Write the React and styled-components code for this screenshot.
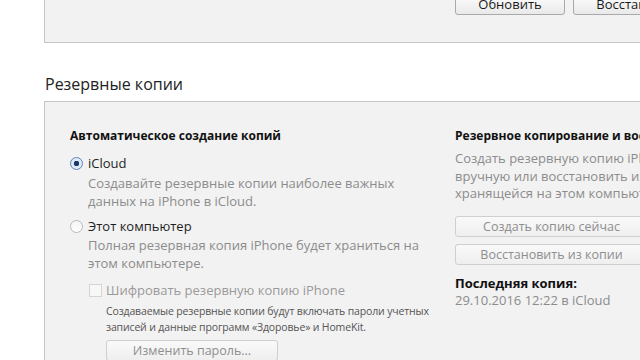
import React from 'react';
import styled, { createGlobalStyle } from 'styled-components';

const theme = {
    panel: '#f2f2f2',
    border: '#c6c6c6',
    text: '#1e1e1e',
    muted: '#8c8c8c',
    font: '"Open Sans", "Noto Sans", sans-serif'
};

const GlobalStyle = createGlobalStyle`
    body {
        margin: 0;
        background: #ffffff;
        font-family: ${theme.font};
        color: ${theme.text};
        overflow: hidden;
    }
`;

const Page = styled.div`
    width: 640px;
    height: 360px;
    overflow: hidden;
    padding-left: 44px;
    box-sizing: border-box;
`;

// top panel is mostly scrolled off, only its lower edge and buttons show
const TopPanel = styled.div`
    margin-top: -10px;
    height: 53px;
    box-sizing: border-box;
    background: ${theme.panel};
    border: 1px solid ${theme.border};
    border-right: none;
    display: flex;
    align-items: flex-start;
    gap: 8px;
    padding: 1px 0 0 410px;
    overflow: hidden;
`;

const Button = styled.button`
    height: ${p => p.$h || 21}px;
    width: ${p => p.$w || 110}px;
    border: 1px solid ${p => (p.$disabled ? '#cfcfcf' : '#a9a9a9')};
    border-radius: 3px;
    background: ${p => (p.$disabled
        ? 'linear-gradient(#f9f9f9, #efefef)'
        : 'linear-gradient(#ffffff, #e9e9e9)')};
    color: ${p => (p.$disabled ? '#8e8e8e' : '#1a1a1a')};
    font-family: ${theme.font};
    font-size: ${p => (p.$disabled ? 12.5 : 13)}px;
    padding: 0;
    flex-shrink: 0;
    white-space: nowrap;
    cursor: default;
`;

const SectionTitle = styled.h2`
    margin: 0;
    padding: 30px 0 0 1px;
    height: 58px;
    box-sizing: border-box;
    font-size: 16px;
    font-weight: 400;
    color: #222;
`;

const Panel = styled.div`
    background: ${theme.panel};
    border: 1px solid ${theme.border};
    border-right: none;
    border-bottom: none;
    height: 280px;
    box-sizing: border-box;
    padding: 26px 0 0 25px;
    display: grid;
    grid-template-columns: 385px 1fr;
    overflow: hidden;
`;

const Column = styled.div`
    display: flex;
    flex-direction: column;
    white-space: nowrap;
    min-width: 0;
`;

const Heading = styled.div`
    font-size: 12px;
    font-weight: 700;
    line-height: 16px;
    color: #111;
`;

const OptionRow = styled.label`
    display: flex;
    align-items: center;
    gap: 5px;
    font-size: 13px;
    line-height: 18px;
    margin-top: ${p => p.$mt || 0}px;
`;

const Radio = styled.span`
    width: 11px;
    height: 11px;
    border-radius: 50%;
    border: 1px solid ${p => (p.$checked ? '#5f86bb' : '#b8b8b8')};
    background: ${p => (p.$checked
        ? 'radial-gradient(circle, #1c3a68 0 2.5px, #dfe9f6 3px)'
        : 'linear-gradient(#f4f4f4, #ffffff)')};
    flex-shrink: 0;
`;

const Description = styled.div`
    padding-left: 18px;
    font-size: 13px;
    line-height: 17.5px;
    color: ${theme.muted};
    margin-top: ${p => p.$mt || 0}px;
`;

const Nested = styled.div`
    padding-left: 19px;
    margin-top: 9px;
    display: flex;
    flex-direction: column;
`;

const CheckRow = styled.label`
    display: flex;
    align-items: center;
    gap: 4px;
    font-size: 13px;
    line-height: 18px;
    color: #9a9a9a;
`;

const Checkbox = styled.span`
    width: 11px;
    height: 11px;
    border: 1px solid #d4d4d4;
    background: #f7f7f7;
    flex-shrink: 0;
`;

const SmallNote = styled.div`
    padding-left: 17px;
    margin-top: 4px;
    font-size: 10.5px;
    line-height: 16px;
    letter-spacing: -0.15px;
    color: #555;
`;

const NestedButton = styled.div`
    padding-left: 17px;
    margin-top: 3px;
`;

const RightText = styled.div`
    font-size: 13px;
    line-height: 17.5px;
    color: ${theme.muted};
    margin-top: ${p => p.$mt || 0}px;
`;

const ButtonStack = styled.div`
    display: flex;
    flex-direction: column;
    gap: 7px;
    margin-top: 13px;
`;

const LastHeading = styled(Heading)`
    font-size: 13px;
    margin-top: 10px;
`;

const App = () => (
    <>
        <GlobalStyle />
        <Page>
            <TopPanel>
                <Button $w={110} $h={23}>Обновить</Button>
                <Button $w={190} $h={23}>Восстановить iPhone...</Button>
            </TopPanel>
            <SectionTitle>Резервные копии</SectionTitle>
            <Panel>
                <Column>
                    <Heading>Автоматическое создание копий</Heading>
                    <OptionRow $mt={10}>
                        <Radio $checked />
                        iCloud
                    </OptionRow>
                    <Description $mt={3}>
                        Создавайте резервные копии наиболее важных<br />
                        данных на iPhone в iCloud.
                    </Description>
                    <OptionRow $mt={7}>
                        <Radio />
                        Этот компьютер
                    </OptionRow>
                    <Description $mt={2}>
                        Полная резервная копия iPhone будет храниться на<br />
                        этом компьютере.
                    </Description>
                    <Nested>
                        <CheckRow>
                            <Checkbox />
                            Шифровать резервную копию iPhone
                        </CheckRow>
                        <SmallNote>
                            Создаваемые резервные копии будут включать пароли учетных<br />
                            записей и данные программ «Здоровье» и HomeKit.
                        </SmallNote>
                        <NestedButton>
                            <Button $disabled $w={172}>Изменить пароль...</Button>
                        </NestedButton>
                    </Nested>
                </Column>
                <Column>
                    <Heading>Резервное копирование и восстановление вручную</Heading>
                    <RightText $mt={6}>
                        Создать резервную копию iPhone на этом компьютере<br />
                        вручную или восстановить из резервной копии,<br />
                        хранящейся на этом компьютере.
                    </RightText>
                    <ButtonStack>
                        <Button $disabled $w={193}>Создать копию сейчас</Button>
                        <Button $disabled $w={193}>Восстановить из копии</Button>
                    </ButtonStack>
                    <LastHeading>Последняя копия:</LastHeading>
                    <RightText $mt={1}>29.10.2016 12:22 в iCloud</RightText>
                </Column>
            </Panel>
        </Page>
    </>
);

export default App;
